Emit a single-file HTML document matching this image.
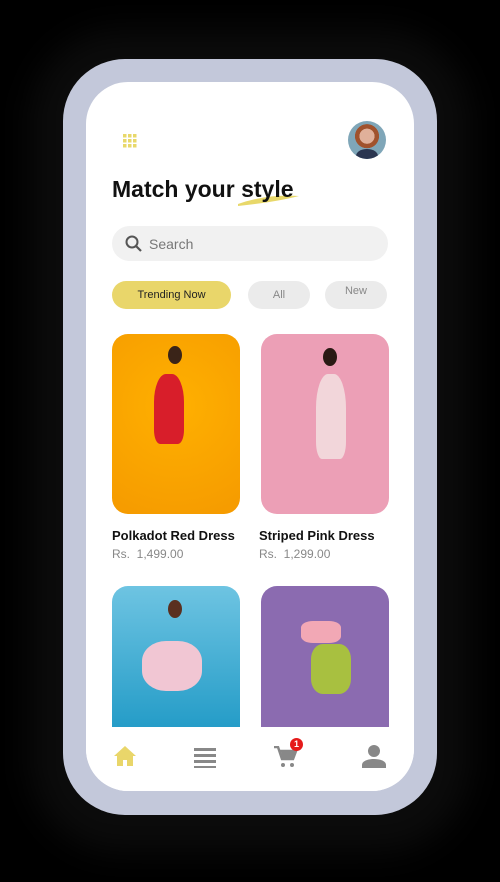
<!DOCTYPE html><html><head><style>
body{margin:0;width:500px;height:882px;background:#000;position:relative;overflow:hidden;font-family:"Liberation Sans",sans-serif}
.shadow{position:absolute;left:30px;top:30px;width:440px;height:822px;border-radius:90px;background:#0b0b0b;filter:blur(16px)}
.phone{position:absolute;left:63px;top:59px;width:374px;height:756px;border-radius:62px;background:#c3c8da}
.screen{position:absolute;left:86px;top:82px;width:328px;height:709px;border-radius:42px;background:#fff;overflow:hidden}
.a{position:absolute}
.card{position:absolute;width:128px;border-radius:16px;overflow:hidden}
.name{position:absolute;font-size:13px;color:#111;font-weight:bold}
.price{position:absolute;font-size:12px;color:#888}
</style></head><body>
<div class="shadow"></div>
<div class="phone"></div>
<div class="screen">
<svg class="a" style="left:37px;top:52px" width="14" height="14"><g fill="#e8d86a"><rect x="0" y="0" width="3.5" height="3.5"/><rect x="5" y="0" width="3.5" height="3.5"/><rect x="10" y="0" width="3.5" height="3.5"/><rect x="0" y="5" width="3.5" height="3.5"/><rect x="5" y="5" width="3.5" height="3.5"/><rect x="10" y="5" width="3.5" height="3.5"/><rect x="0" y="10" width="3.5" height="3.5"/><rect x="5" y="10" width="3.5" height="3.5"/><rect x="10" y="10" width="3.5" height="3.5"/></g></svg>
<div class="a" style="left:262px;top:39px;width:38px;height:38px;border-radius:50%;background:radial-gradient(circle at 50% 40%,#e0b09a 0 25%,#a0522d 26% 40%,#7fa6b8 41%);overflow:hidden"><div class="a" style="left:8px;top:28px;width:22px;height:14px;border-radius:50%;background:#2a3550"></div></div>
<svg class="a" style="left:150px;top:108px" width="65" height="18"><path d="M2 14 Q30 4 63 6 Q40 12 2 16Z" fill="#e8d86a"/></svg>
<div class="a" style="left:26px;top:94px;font-size:23px;font-weight:bold;color:#111">Match your style</div>
<div class="a" style="left:26px;top:144px;width:276px;height:35px;border-radius:18px;background:#f1f1f1"></div>
<svg class="a" style="left:39px;top:153px" width="18" height="18"><circle cx="7" cy="7" r="5.5" stroke="#555" stroke-width="2" fill="none"/><path d="M11 11L16 16" stroke="#555" stroke-width="2.2"/></svg>
<div class="a" style="left:63px;top:154px;font-size:14px;color:#777">Search</div>
<div class="a" style="left:26px;top:199px;width:119px;height:28px;border-radius:14px;background:#e9d66a;font-size:11px;text-align:center;line-height:28px;color:#222">Trending Now</div>
<div class="a" style="left:162px;top:199px;width:62px;height:28px;border-radius:14px;background:#ebebeb;font-size:11px;text-align:center;line-height:28px;color:#888">All</div>
<div class="a" style="left:239px;top:199px;width:62px;height:28px;border-radius:14px;background:#ebebeb;font-size:11px;text-align:center;line-height:20px;color:#888">New</div>
<div class="card" style="left:26px;top:252px;height:180px;background:radial-gradient(circle at 50% 40%,#ffb000,#f59a00)"><div class="a" style="left:42px;top:40px;width:30px;height:70px;border-radius:40% 40% 20% 20%;background:#d81e2a"></div><div class="a" style="left:56px;top:12px;width:14px;height:18px;border-radius:50%;background:#3a2418"></div></div>
<div class="card" style="left:175px;top:252px;height:180px;background:#ec9fb6"><div class="a" style="left:55px;top:40px;width:30px;height:85px;border-radius:40% 40% 20% 20%;background:#f2d6da"></div><div class="a" style="left:62px;top:14px;width:14px;height:18px;border-radius:50%;background:#2a1a14"></div></div>
<div class="name" style="left:26px;top:446px">Polkadot Red Dress</div>
<div class="price" style="left:26px;top:465px">Rs.&nbsp; 1,499.00</div>
<div class="name" style="left:173px;top:446px">Striped Pink Dress</div>
<div class="price" style="left:173px;top:465px">Rs.&nbsp; 1,299.00</div>
<div class="card" style="left:26px;top:504px;height:160px;background:linear-gradient(#6ec4e2,#1b97c4)"><div class="a" style="left:30px;top:55px;width:60px;height:50px;border-radius:40%;background:#f1c6d3"></div><div class="a" style="left:56px;top:14px;width:14px;height:18px;border-radius:50%;background:#5a3020"></div></div>
<div class="card" style="left:175px;top:504px;height:160px;background:#8b6bb0"><div class="a" style="left:40px;top:35px;width:40px;height:22px;border-radius:30%;background:#f2a8b5"></div><div class="a" style="left:50px;top:58px;width:40px;height:50px;border-radius:30%;background:#a8c040"></div></div>
<div class="a" style="left:0;top:645px;width:328px;height:64px;background:#fff"></div>
<svg class="a" style="left:27px;top:663px" width="24" height="22"><path d="M12 1L1 11h3v10h6v-6h4v6h6V11h3z" fill="#e9d66a"/></svg>
<svg class="a" style="left:108px;top:664px" width="22" height="22"><g fill="#888"><rect y="2" width="22" height="3"/><rect y="8" width="22" height="3"/><rect y="14" width="22" height="3"/><rect y="20" width="22" height="2"/></g></svg>
<svg class="a" style="left:188px;top:664px" width="24" height="22"><path d="M0 1h4l4 12h11l3-8H6" fill="none" stroke="#888" stroke-width="2.5"/><path d="M7 6h15l-3 7H8z" fill="#888"/><circle cx="9" cy="19" r="2" fill="#888"/><circle cx="18" cy="19" r="2" fill="#888"/></svg>
<div class="a" style="left:204px;top:656px;width:13px;height:13px;border-radius:50%;background:#e51b1b;color:#fff;font-size:9px;font-weight:bold;text-align:center;line-height:13px">1</div>
<svg class="a" style="left:276px;top:663px" width="24" height="24"><circle cx="12" cy="6" r="6" fill="#888"/><path d="M0 23v-3c0-4 6-6 12-6s12 2 12 6v3z" fill="#888"/></svg>
</div>
</body></html>
